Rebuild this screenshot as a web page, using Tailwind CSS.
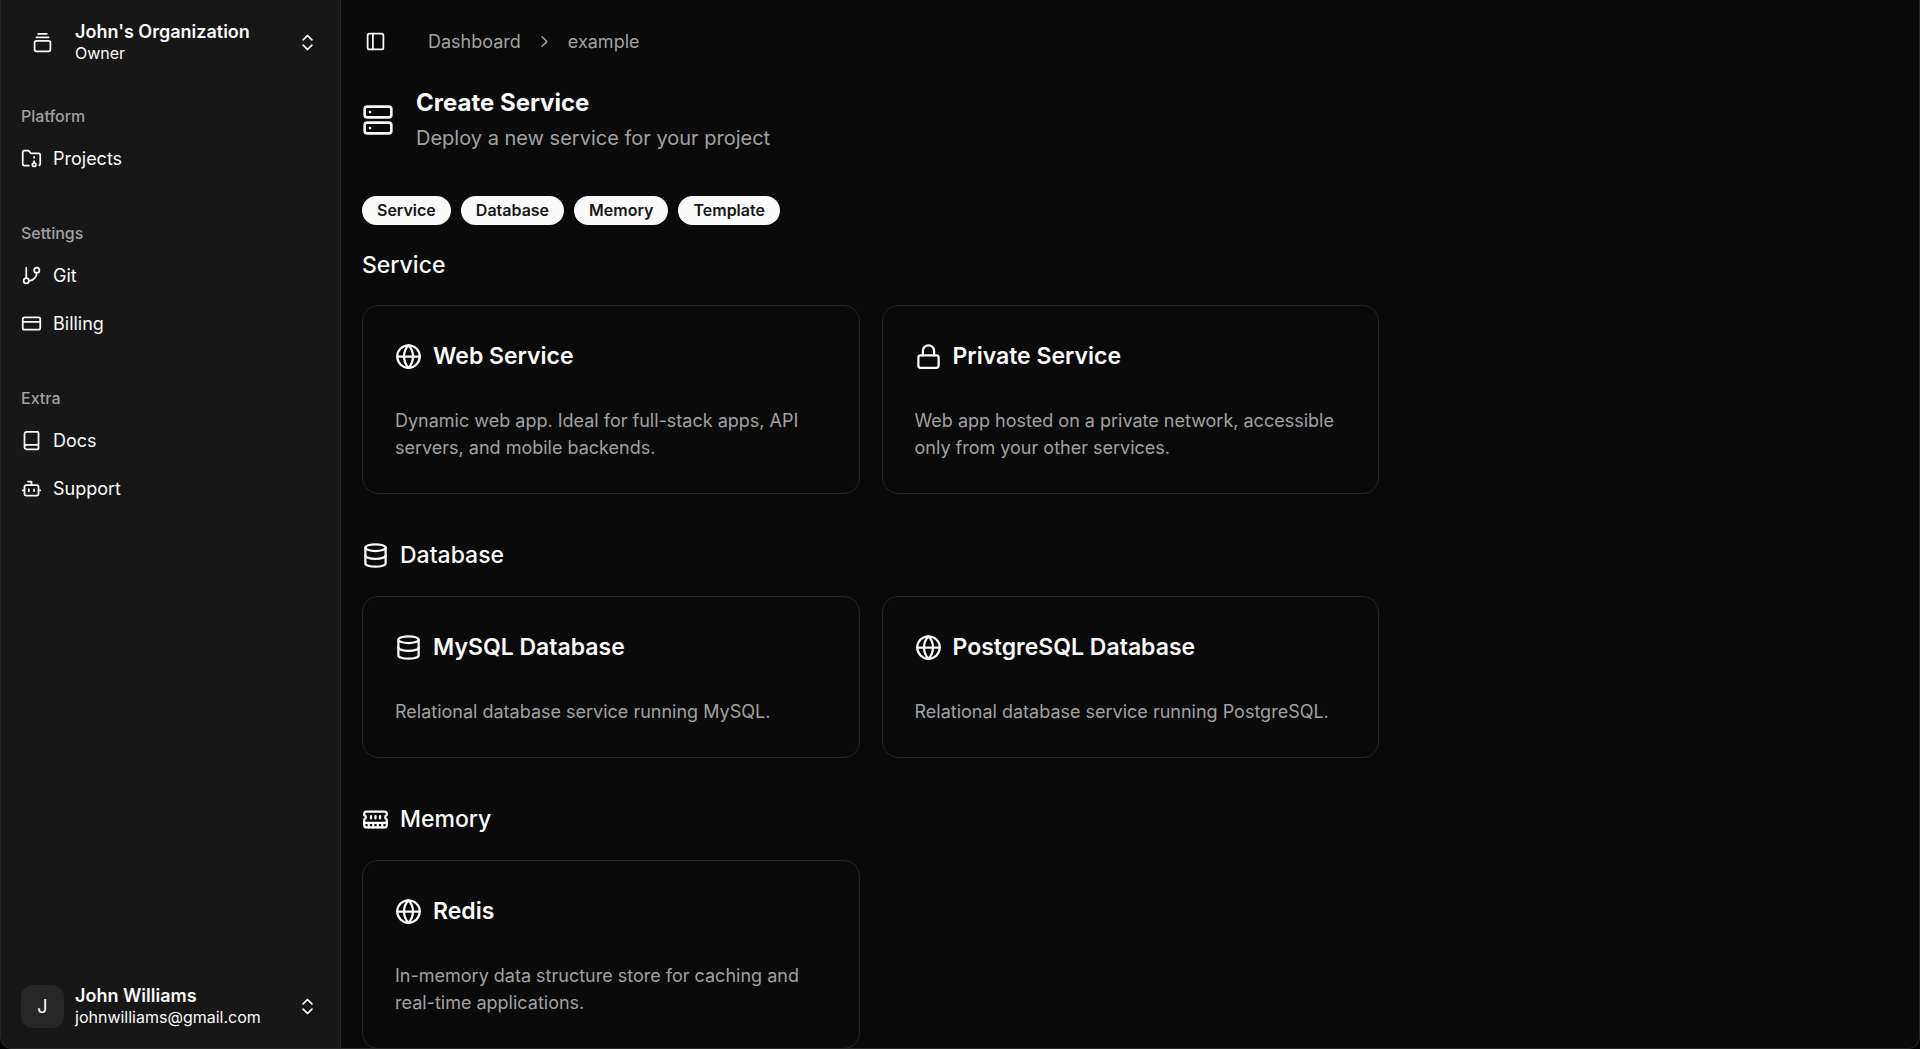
<!DOCTYPE html>
<html lang="en">
<head>
    <meta charset="UTF-8">
    <meta name="viewport" content="width=device-width, initial-scale=1.0">
    <title>Create Service</title>
    <script src="https://cdn.jsdelivr.net/npm/@tailwindcss/browser@4"></script>
</head>
<body class="bg-black font-[Inter,sans-serif] text-neutral-50 antialiased">
    <!-- Shared icons -->
    <svg class="hidden" aria-hidden="true">
        <symbol id="globe" viewBox="0 0 24 24">
            <circle cx="12" cy="12" r="10" />
            <path d="M12 2a14.5 14.5 0 0 0 0 20 14.5 14.5 0 0 0 0-20" />
            <path d="M2 12h20" />
        </symbol>
        <symbol id="database" viewBox="0 0 24 24">
            <ellipse cx="12" cy="5" rx="9" ry="3" />
            <path d="M3 5V19A9 3 0 0 0 21 19V5" />
            <path d="M3 12A9 3 0 0 0 21 12" />
        </symbol>
        <symbol id="chevrons" viewBox="0 0 24 24">
            <path d="m7 15 5 5 5-5" />
            <path d="m7 9 5-5 5 5" />
        </symbol>
    </svg>

    <div class="flex h-screen overflow-hidden rounded-b-xl border-x border-b border-neutral-800 bg-neutral-950">
        <!-- Sidebar -->
        <aside class="flex w-[340px] shrink-0 flex-col border-r border-neutral-800 bg-neutral-900">
            <div class="px-[10px] pt-[10px] pb-[10px]">
                <button type="button" class="flex h-16 w-full items-center gap-[11px] rounded-lg px-[10px] text-left">
                    <span class="flex size-[43px] shrink-0 items-center justify-center">
                        <svg class="size-[21px]" viewBox="0 0 24 24" fill="none" stroke="currentColor" stroke-width="2" stroke-linecap="round" stroke-linejoin="round">
                            <path d="M7 2h10" />
                            <path d="M5 6h14" />
                            <rect width="18" height="12" x="3" y="10" rx="2" />
                        </svg>
                    </span>
                    <span class="flex-1">
                        <span class="block text-[18px] leading-[23px] font-semibold">John's Organization</span>
                        <span class="block text-[16px] leading-[21px]">Owner</span>
                    </span>
                    <svg class="mr-[2px] size-[21px]" fill="none" stroke="currentColor" stroke-width="2" stroke-linecap="round" stroke-linejoin="round"><use href="#chevrons" /></svg>
                </button>
            </div>

            <nav class="flex flex-1 flex-col gap-[11px]">
                <div class="p-[10px]">
                    <h2 class="flex h-[43px] items-center px-[10px] text-[16px] font-medium text-neutral-400">Platform</h2>
                    <a href="#" class="flex h-[43px] items-center gap-[11px] px-[10px] text-[18px]">
                        <svg class="size-[21px]" viewBox="0 0 24 24" fill="none" stroke="currentColor" stroke-width="2" stroke-linecap="round" stroke-linejoin="round">
                            <circle cx="15" cy="19" r="2" />
                            <path d="M20.9 19.8A2 2 0 0 0 22 18V8a2 2 0 0 0-2-2h-7.9a2 2 0 0 1-1.69-.9L9.6 3.9A2 2 0 0 0 7.93 3H4a2 2 0 0 0-2 2v13a2 2 0 0 0 2 2h5.1" />
                            <path d="M15 11v-1" />
                            <path d="M15 17v-2" />
                        </svg>
                        Projects
                    </a>
                </div>
                <div class="p-[10px]">
                    <h2 class="flex h-[43px] items-center px-[10px] text-[16px] font-medium text-neutral-400">Settings</h2>
                    <div class="flex flex-col gap-[5px]">
                        <a href="#" class="flex h-[43px] items-center gap-[11px] px-[10px] text-[18px]">
                            <svg class="size-[21px]" viewBox="0 0 24 24" fill="none" stroke="currentColor" stroke-width="2" stroke-linecap="round" stroke-linejoin="round">
                                <path d="M6 3v12" />
                                <circle cx="18" cy="6" r="3" />
                                <circle cx="6" cy="18" r="3" />
                                <path d="M18 9a9 9 0 0 1-9 9" />
                            </svg>
                            Git
                        </a>
                        <a href="#" class="flex h-[43px] items-center gap-[11px] px-[10px] text-[18px]">
                            <svg class="size-[21px]" viewBox="0 0 24 24" fill="none" stroke="currentColor" stroke-width="2" stroke-linecap="round" stroke-linejoin="round">
                                <rect width="20" height="14" x="2" y="5" rx="2" />
                                <path d="M2 10h20" />
                            </svg>
                            Billing
                        </a>
                    </div>
                </div>
                <div class="p-[10px]">
                    <h2 class="flex h-[43px] items-center px-[10px] text-[16px] font-medium text-neutral-400">Extra</h2>
                    <div class="flex flex-col gap-[5px]">
                        <a href="#" class="flex h-[43px] items-center gap-[11px] px-[10px] text-[18px]">
                            <svg class="size-[21px]" viewBox="0 0 24 24" fill="none" stroke="currentColor" stroke-width="2" stroke-linecap="round" stroke-linejoin="round">
                                <path d="M4 19.5v-15A2.5 2.5 0 0 1 6.5 2H19a1 1 0 0 1 1 1v18a1 1 0 0 1-1 1H6.5a1 1 0 0 1 0-5H20" />
                            </svg>
                            Docs
                        </a>
                        <a href="#" class="flex h-[43px] items-center gap-[11px] px-[10px] text-[18px]">
                            <svg class="size-[21px]" viewBox="0 0 24 24" fill="none" stroke="currentColor" stroke-width="2" stroke-linecap="round" stroke-linejoin="round">
                                <path d="M12 8V4H8" />
                                <rect width="16" height="12" x="4" y="8" rx="2" />
                                <path d="M2 14h2" />
                                <path d="M20 14h2" />
                                <path d="M15 13v2" />
                                <path d="M9 13v2" />
                            </svg>
                            Support
                        </a>
                    </div>
                </div>
            </nav>

            <div class="p-[10px]">
                <button type="button" class="flex h-16 w-full items-center gap-[11px] rounded-lg px-[10px] text-left">
                    <span class="flex size-[43px] shrink-0 items-center justify-center rounded-xl bg-neutral-800 text-[18px]">J</span>
                    <span class="flex-1">
                        <span class="block text-[18px] leading-[23px] font-semibold">John Williams</span>
                        <span class="block text-[16px] leading-[21px]">johnwilliams@gmail.com</span>
                    </span>
                    <svg class="mr-[2px] size-[21px]" fill="none" stroke="currentColor" stroke-width="2" stroke-linecap="round" stroke-linejoin="round"><use href="#chevrons" /></svg>
                </button>
            </div>
        </aside>

        <!-- Main -->
        <main class="min-w-0 flex-1 overflow-hidden px-[21px]">
            <header class="flex h-[82px] items-center gap-[34px]">
                <button type="button" aria-label="Toggle sidebar" class="-ml-[5px] flex size-[37px] items-center justify-center">
                    <svg class="size-[21px]" viewBox="0 0 24 24" fill="none" stroke="currentColor" stroke-width="2" stroke-linecap="round" stroke-linejoin="round">
                        <rect width="18" height="18" x="3" y="3" rx="2" />
                        <path d="M9 3v18" />
                    </svg>
                </button>
                <nav class="flex items-center gap-[14px] text-[18px] text-neutral-400">
                    <a href="#">Dashboard</a>
                    <svg class="size-[19px]" viewBox="0 0 24 24" fill="none" stroke="currentColor" stroke-width="2" stroke-linecap="round" stroke-linejoin="round">
                        <path d="m9 18 6-6-6-6" />
                    </svg>
                    <a href="#">example</a>
                </nav>
            </header>

            <div class="max-w-[1017px]">
                <div class="mt-[5px] flex items-center gap-[22px]">
                    <svg class="size-8" viewBox="0 0 24 24" fill="none" stroke="currentColor" stroke-width="2" stroke-linecap="round" stroke-linejoin="round">
                        <rect width="20" height="8" x="2" y="2" rx="2" />
                        <rect width="20" height="8" x="2" y="14" rx="2" />
                        <path d="M6 6h.01" />
                        <path d="M6 18h.01" />
                    </svg>
                    <div>
                        <h1 class="text-[24px] leading-8 font-bold">Create Service</h1>
                        <p class="mt-[5px] text-[20px] leading-7 text-neutral-400">Deploy a new service for your project</p>
                    </div>
                </div>

                <div class="mt-[44px] flex gap-[10px] text-[16px] leading-[29px] font-semibold text-neutral-900">
                    <a href="#service" class="rounded-full bg-neutral-50 px-[15px]">Service</a>
                    <a href="#databases" class="rounded-full bg-neutral-50 px-[15px]">Database</a>
                    <a href="#memory" class="rounded-full bg-neutral-50 px-[15px]">Memory</a>
                    <a href="#template" class="rounded-full bg-neutral-50 px-[15px]">Template</a>
                </div>

                <section id="service" class="mt-[22px]">
                    <h2 class="text-[23px] leading-[37px] font-medium">Service</h2>
                    <div class="mt-[21px] grid grid-cols-2 gap-[22px]">
                        <a href="#" class="rounded-2xl border border-neutral-800 p-8">
                            <h3 class="flex items-center gap-[11px] text-[23px] leading-[37px] font-semibold">
                                <svg class="size-[27px]" fill="none" stroke="currentColor" stroke-width="2" stroke-linecap="round" stroke-linejoin="round"><use href="#globe" /></svg>
                                Web Service
                            </h3>
                            <p class="mt-8 text-[18px] leading-[27px] text-neutral-400">Dynamic web app. Ideal for full-stack apps, API servers, and mobile backends.</p>
                        </a>
                        <a href="#" class="rounded-2xl border border-neutral-800 p-8">
                            <h3 class="flex items-center gap-[11px] text-[23px] leading-[37px] font-semibold">
                                <svg class="size-[27px]" viewBox="0 0 24 24" fill="none" stroke="currentColor" stroke-width="2" stroke-linecap="round" stroke-linejoin="round">
                                    <rect width="18" height="11" x="3" y="11" rx="2" />
                                    <path d="M7 11V7a5 5 0 0 1 10 0v4" />
                                </svg>
                                Private Service
                            </h3>
                            <p class="mt-8 text-[18px] leading-[27px] text-neutral-400">Web app hosted on a private network, accessible only from your other services.</p>
                        </a>
                    </div>
                </section>

                <section id="databases" class="mt-[43px]">
                    <h2 class="flex items-center gap-[11px] text-[23px] leading-[37px] font-medium">
                        <svg class="size-[27px]" fill="none" stroke="currentColor" stroke-width="2" stroke-linecap="round" stroke-linejoin="round"><use href="#database" /></svg>
                        Database
                    </h2>
                    <div class="mt-[22px] grid grid-cols-2 gap-[22px]">
                        <a href="#" class="rounded-2xl border border-neutral-800 p-8">
                            <h3 class="flex items-center gap-[11px] text-[23px] leading-[37px] font-semibold">
                                <svg class="size-[27px]" fill="none" stroke="currentColor" stroke-width="2" stroke-linecap="round" stroke-linejoin="round"><use href="#database" /></svg>
                                MySQL Database
                            </h3>
                            <p class="mt-8 text-[18px] leading-[27px] text-neutral-400">Relational database service running MySQL.</p>
                        </a>
                        <a href="#" class="rounded-2xl border border-neutral-800 p-8">
                            <h3 class="flex items-center gap-[11px] text-[23px] leading-[37px] font-semibold">
                                <svg class="size-[27px]" fill="none" stroke="currentColor" stroke-width="2" stroke-linecap="round" stroke-linejoin="round"><use href="#globe" /></svg>
                                PostgreSQL Database
                            </h3>
                            <p class="mt-8 text-[18px] leading-[27px] text-neutral-400">Relational database service running PostgreSQL.</p>
                        </a>
                    </div>
                </section>

                <section id="memory" class="mt-[43px]">
                    <h2 class="flex items-center gap-[11px] text-[23px] leading-[37px] font-medium">
                        <svg class="size-[27px]" viewBox="0 0 24 24" fill="none" stroke="currentColor" stroke-width="2" stroke-linecap="round" stroke-linejoin="round">
                            <path d="M6 19v-3" />
                            <path d="M10 19v-3" />
                            <path d="M14 19v-3" />
                            <path d="M18 19v-3" />
                            <path d="M8 11V9" />
                            <path d="M16 11V9" />
                            <path d="M12 11V9" />
                            <path d="M2 15h20" />
                            <path d="M2 7a2 2 0 0 1 2-2h16a2 2 0 0 1 2 2v1.1a2 2 0 0 0 0 3.837V17a2 2 0 0 1-2 2H4a2 2 0 0 1-2-2v-5.1a2 2 0 0 0 0-3.837Z" />
                        </svg>
                        Memory
                    </h2>
                    <div class="mt-[22px] grid grid-cols-2 gap-[22px]">
                        <a href="#" class="rounded-2xl border border-neutral-800 p-8">
                            <h3 class="flex items-center gap-[11px] text-[23px] leading-[37px] font-semibold">
                                <svg class="size-[27px]" fill="none" stroke="currentColor" stroke-width="2" stroke-linecap="round" stroke-linejoin="round"><use href="#globe" /></svg>
                                Redis
                            </h3>
                            <p class="mt-8 text-[18px] leading-[27px] text-neutral-400">In-memory data structure store for caching and real-time applications.</p>
                        </a>
                    </div>
                </section>
            </div>
        </main>
    </div>
</body>
</html>
